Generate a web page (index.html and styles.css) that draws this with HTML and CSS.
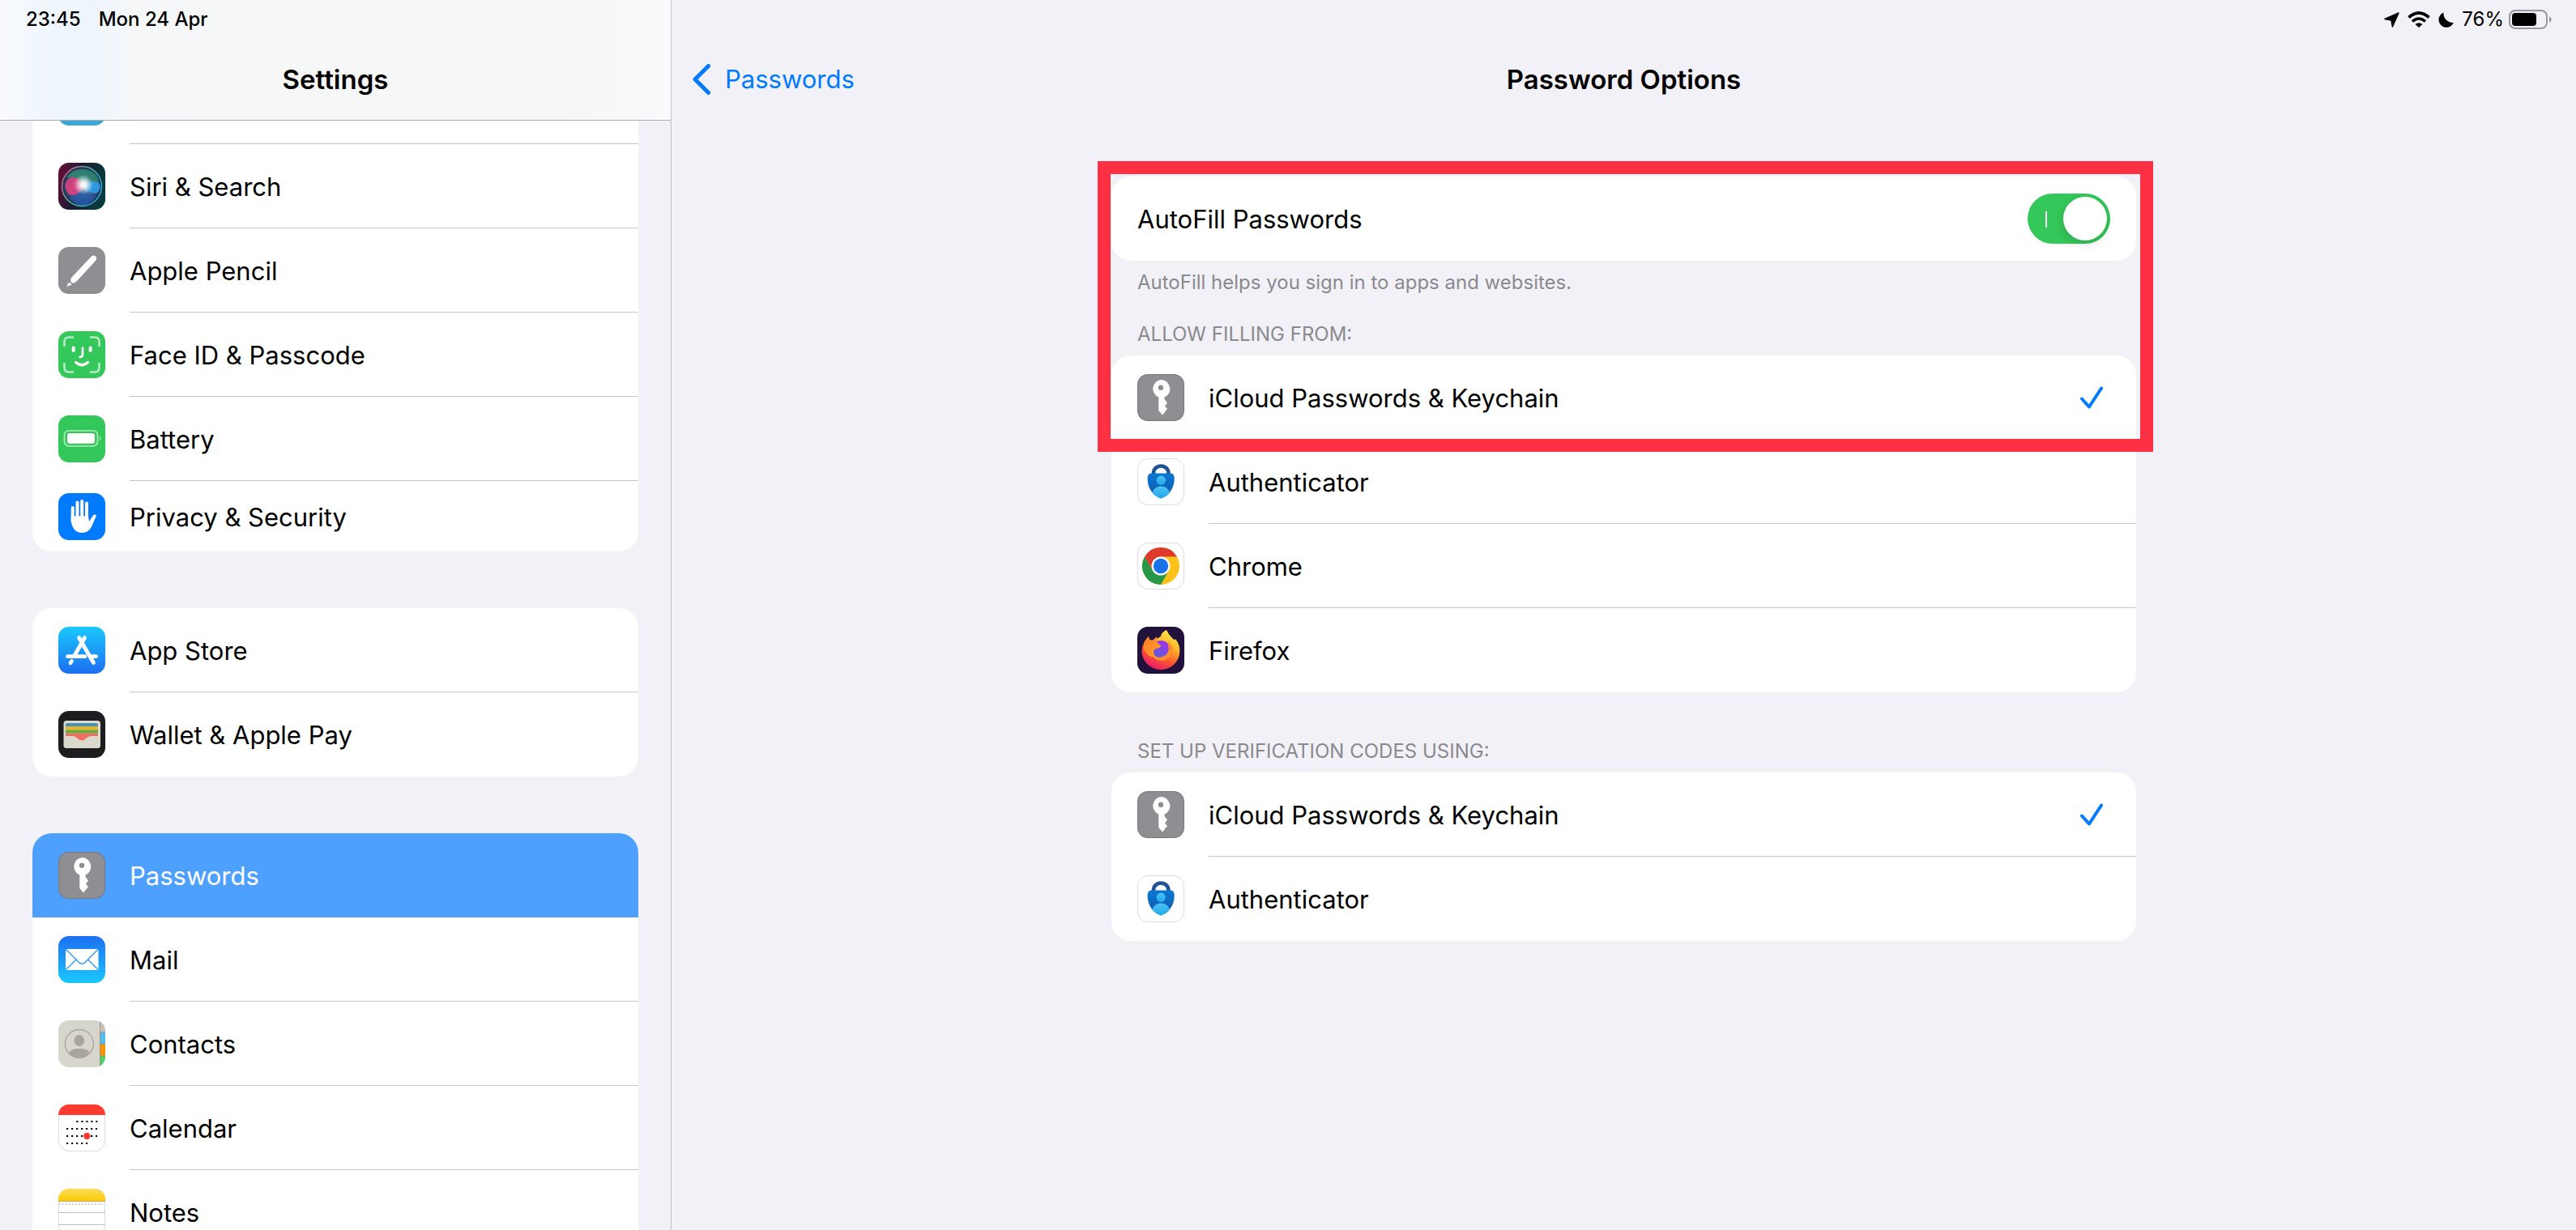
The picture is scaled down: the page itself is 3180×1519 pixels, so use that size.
FILE: index.html
```html
<!DOCTYPE html>
<html lang="en">
<head>
  <meta charset="UTF-8" />
  <meta name="viewport" content="width=device-width, initial-scale=1.0" />
  <title>Settings - Password Options</title>
  <link rel="stylesheet" href="styles.css">
</head>
<body>
  <!-- Shared icons -->
  <svg class="sprite" aria-hidden="true">
    <symbol id="icon-key" viewBox="0 0 58 58">
      <rect width="58" height="58" rx="13" fill="#77777c"/>
      <rect x="1" y="1" width="56" height="56" rx="12" fill="#8e8e93"/>
      <path fill="#fff" fill-rule="evenodd" d="M29 7a11.2 11.2 0 0 1 4.5 21.5V31l3.500 4.500-3 4 3 3.500-6 7.500-4.700-5.500V28.500A11.200 11.200 0 0 1 29 7zm0 6.500a3.200 3.200 0 1 0 0 6.400 3.200 3.200 0 0 0 0-6.400z"/>
    </symbol>
    <symbol id="icon-auth" viewBox="0 0 58 58">
      <defs>
        <linearGradient id="authBody" x1="0" y1="0" x2="0" y2="1"><stop offset="0" stop-color="#0a78d4"/><stop offset="1" stop-color="#1257a5"/></linearGradient>
        <linearGradient id="authMan" x1="0" y1="0" x2="0" y2="1"><stop offset="0" stop-color="#4cc3f4"/><stop offset="1" stop-color="#22a7ea"/></linearGradient>
      </defs>
      <rect x="0.5" y="0.5" width="57" height="57" rx="12.5" fill="#fff" stroke="#dcdcde"/>
      <path d="M20 21v-3a9.200 8.500 0 0 1 18.400 0v3" fill="none" stroke="#1f5494" stroke-width="4.5"/>
      <path d="M17 18.500h24.500q4 0 4.200 6C46 38 38 46 29.200 49.500 20 46 12.300 38 12.600 24.500q.2-6 4.400-6z" fill="url(#authBody)"/>
      <circle cx="29.2" cy="27.2" r="5.7" fill="url(#authMan)"/>
      <path d="M18.500 43c1-5 5-8.500 10.700-8.500S39 38 40 43c-3.200 3.300-7 5.300-10.800 6.600C25.300 48.300 21.700 46.300 18.500 43z" fill="url(#authMan)"/>
    </symbol>
    <symbol id="icon-tick" viewBox="0 0 28 28">
      <path d="M2 15.500 11 25.500 26 2.500" fill="none" stroke="#007aff" stroke-width="4" stroke-linecap="round" stroke-linejoin="round"/>
    </symbol>
  </svg>

  <div class="screen">
    <aside class="sidebar">
      <header class="sidebar-header">
        <div class="status">
          <span>23:45</span>
          <span>Mon 24 Apr</span>
        </div>
        <h1 class="title">Settings</h1>
      </header>

      <nav class="sidebar-list">
        <div class="group group-first">
          <a href="#" class="row row-cut" aria-label="Wallpaper">
            <svg class="icon" viewBox="0 0 58 58"><rect width="58" height="58" rx="13" fill="#38a8dc"/></svg>
            <span class="label"></span>
          </a>
          <a href="#" class="row">
            <svg class="icon" viewBox="0 0 58 58">
              <defs>
                <linearGradient id="siriBg" x1="0" y1="0" x2="1" y2="0.3"><stop offset="0" stop-color="#6a0f35"/><stop offset="0.5" stop-color="#1b1a35"/><stop offset="1" stop-color="#063a3c"/></linearGradient>
                <radialGradient id="siriOrb"><stop offset="0" stop-color="#8fb5d8"/><stop offset="0.6" stop-color="#3c5f88"/><stop offset="1" stop-color="#1c2c4e"/></radialGradient>
                <linearGradient id="siriRing" x1="0" y1="0.2" x2="1" y2="0.8"><stop offset="0" stop-color="#e85a83"/><stop offset="0.5" stop-color="#3fc09a"/><stop offset="1" stop-color="#2f9be8"/></linearGradient>
                <radialGradient id="siriGlow"><stop offset="0" stop-color="#fff"/><stop offset="0.3" stop-color="#fff" stop-opacity="0.85"/><stop offset="1" stop-color="#fff" stop-opacity="0"/></radialGradient>
              </defs>
              <rect width="58" height="58" rx="13" fill="url(#siriBg)"/>
              <circle cx="29" cy="29" r="24.5" fill="url(#siriOrb)"/>
              <path d="M10 18Q22 2 42 11 52 18 50 28 36 32 30 27 20 18 10 18z" fill="#2f8a70" opacity="0.8"/>
              <path d="M31 28Q22 12 11 21 5 30 13 39 24 44 31 28z" fill="#dd3f7d" opacity="0.9"/>
              <path d="M31 28Q47 17 52 29 50 41 41 37 36 35 31 28z" fill="#2d9ce6" opacity="0.9"/>
              <path d="M14 42Q26 40 31 29 37 44 47 40 40 53 28 53 18 50 14 42z" fill="#2457a8" opacity="0.8"/>
              <circle cx="29" cy="29" r="24.5" fill="none" stroke="url(#siriRing)" stroke-width="1.5"/>
              <circle cx="31" cy="27" r="12" fill="url(#siriGlow)"/>
            </svg>
            <span class="label">Siri &amp; Search</span>
          </a>
          <a href="#" class="row">
            <svg class="icon" viewBox="0 0 58 58">
              <rect width="58" height="58" rx="13" fill="#8e8e93"/>
              <path d="M41 11.500q2.500-2 5 0 2 2.500 0 5.500L23 42q-2 2.500-6 2.700-3-2.500-1-6.700z" fill="#fff"/>
              <path d="M13 43.500 17 46.500 10 49z" fill="#fff"/>
            </svg>
            <span class="label">Apple Pencil</span>
          </a>
          <a href="#" class="row">
            <svg class="icon" viewBox="0 0 58 58" fill="none" stroke="#fff" stroke-linecap="round">
              <rect width="58" height="58" rx="13" fill="#34c759" stroke="none"/>
              <path d="M7.500 18v-5q0-5.500 5.500-5.500h5M40 7.500h5q5.500 0 5.500 5.500v5M50.500 40v5q0 5.500-5.500 5.500h-5M18 50.500h-5q-5.500 0-5.500-5.500v-5" stroke-width="2.6" opacity="0.65"/>
              <path d="M18.700 20.500v3.500M39.600 20.500v3.500" stroke-width="4"/>
              <path d="M30 20.500v8.500q0 3-3.500 3" stroke-width="2.6"/>
              <path d="M21.500 38.500q7.500 6.500 15 0" stroke-width="3.2"/>
            </svg>
            <span class="label">Face ID &amp; Passcode</span>
          </a>
          <a href="#" class="row">
            <svg class="icon" viewBox="0 0 58 58">
              <rect width="58" height="58" rx="13" fill="#34c759"/>
              <rect x="7.5" y="18.8" width="41" height="19" rx="5.5" fill="none" stroke="#a6e7b5" stroke-width="1.8"/>
              <rect x="11" y="22" width="34" height="12.7" rx="3" fill="#fff"/>
              <path d="M51 25q3 3.300 0 6.600z" fill="#a6e7b5"/>
            </svg>
            <span class="label">Battery</span>
          </a>
          <a href="#" class="row row-short">
            <svg class="icon" viewBox="0 0 58 58" fill="#fff" stroke="#fff" stroke-linecap="round">
              <rect width="58" height="58" rx="13" fill="#007aff" stroke="none"/>
              <path d="M17.700 18v16M23.500 11.500v20M29.200 10v20M35 12.500v20" stroke-width="4"/>
              <path d="M15.700 28.500h21.300l1 6.500 5-7.500q2.200-2 4 .3-2 4.700-4.500 10.200C39.500 45.500 36 49 29 49q-8 0-11.300-7.500-1.800-4-2-7z" stroke="none"/>
            </svg>
            <span class="label">Privacy &amp; Security</span>
          </a>
        </div>

        <div class="group">
          <a href="#" class="row">
            <svg class="icon" viewBox="0 0 58 58">
              <defs><linearGradient id="storeBg" x1="0" y1="0" x2="0" y2="1"><stop offset="0" stop-color="#1ac8fc"/><stop offset="1" stop-color="#1d6ff2"/></linearGradient></defs>
              <rect width="58" height="58" rx="13" fill="url(#storeBg)"/>
              <path d="M32.500 13.500 19.500 36.500M25.500 13.500 43.500 44.500M11.500 36.700h21.500M41 36.700h5.500M16.500 42.500l-1.500 2.300" fill="none" stroke="#fff" stroke-width="4.8" stroke-linecap="round"/>
            </svg>
            <span class="label">App Store</span>
          </a>
          <a href="#" class="row">
            <svg class="icon" viewBox="0 0 58 58">
              <rect width="58" height="58" rx="13" fill="#1d1d1f"/>
              <rect x="6.5" y="12" width="45.5" height="34" rx="3.5" fill="#dbd8cd"/>
              <path d="M9 19v-2q0-2 2-2h36q2 0 2 2v2z" fill="#4294b8"/>
              <path d="M9 19h40v4.500H9z" fill="#e9b32a"/>
              <path d="M9 23.500h40v4H9z" fill="#64ab3b"/>
              <path d="M9 27.500h40V31h-9q-3 0-5 2.500-6 5.500-12 0-2-2.500-5-2.500H9z" fill="#ee6e60"/>
            </svg>
            <span class="label">Wallet &amp; Apple Pay</span>
          </a>
        </div>

        <div class="group">
          <a href="#" class="row row-active" aria-current="page">
            <svg class="icon"><use href="#icon-key"/></svg>
            <span class="label">Passwords</span>
          </a>
          <a href="#" class="row">
            <svg class="icon" viewBox="0 0 58 58">
              <defs><linearGradient id="mailBg" x1="0" y1="0" x2="0" y2="1"><stop offset="0" stop-color="#1d6ff2"/><stop offset="1" stop-color="#1ac8fc"/></linearGradient></defs>
              <rect width="58" height="58" rx="13" fill="url(#mailBg)"/>
              <rect x="9" y="16" width="40.5" height="26" rx="2.5" fill="#fff"/>
              <path d="M10 17 25.500 32.500q3.700 3.400 7.500 0L48.500 17M10 41l12-12M48.500 41l-12-12" fill="none" stroke="#2a93f5" stroke-width="1.3"/>
            </svg>
            <span class="label">Mail</span>
          </a>
          <a href="#" class="row">
            <svg class="icon" viewBox="0 0 58 58">
              <clipPath id="tile"><rect width="58" height="58" rx="13"/></clipPath>
              <g clip-path="url(#tile)">
                <path d="M0 0h58v58H0z" fill="#d7d6cc"/>
                <path d="M51.500 0H58v15h-6.500z" fill="#c5c3bb"/>
                <path d="M51.500 15H58v14h-6.500z" fill="#55bef0"/>
                <path d="M51.500 29H58v15h-6.500z" fill="#ff9500"/>
                <path d="M51.500 44H58v14h-6.500z" fill="#4cd265"/>
                <path d="M51.500 0v58M51.500 15H58M51.500 29.500H58M51.500 44H58" stroke="#8f8a7c" stroke-width="0.8"/>
              </g>
              <circle cx="25.8" cy="29" r="17.5" fill="none" stroke="#aaa49c" stroke-width="1.3"/>
              <ellipse cx="25.8" cy="25" rx="6.2" ry="7" fill="#aaa49c"/>
              <path d="M13 40.500q1.500-5.500 12.800-5.500t12.800 5.500Q33.500 46.500 25.800 46.500T13 40.500z" fill="#aaa49c"/>
            </svg>
            <span class="label">Contacts</span>
          </a>
          <a href="#" class="row">
            <svg class="icon" viewBox="0 0 58 58">
              <rect x="0.5" y="0.5" width="57" height="57" rx="12.5" fill="#fff" stroke="#dcdcde"/>
              <path d="M0 13A13 13 0 0 1 13 0h32a13 13 0 0 1 13 13z" fill="#ff3b30"/>
              <path d="M22.300 21h26M10 30h38M10 39h38M10 48h27" stroke="#000" stroke-width="2.2" stroke-dasharray="2.2 3.8"/>
              <circle cx="35.3" cy="39" r="4.2" fill="#ff3b30"/>
            </svg>
            <span class="label">Calendar</span>
          </a>
          <a href="#" class="row">
            <svg class="icon" viewBox="0 0 58 58">
              <defs><linearGradient id="notesBg" x1="0" y1="0" x2="0" y2="1"><stop offset="0" stop-color="#fddc5a"/><stop offset="1" stop-color="#fccb05"/></linearGradient></defs>
              <rect x="0.5" y="0.5" width="57" height="57" rx="12.5" fill="#fff" stroke="#dcdcde"/>
              <path d="M0 15v-2A13 13 0 0 1 13 0h32a13 13 0 0 1 13 13v2z" fill="url(#notesBg)"/>
              <path d="M0 15.500h58" stroke="#c2a858"/>
              <path d="M1 19h56" stroke="#c8c8ca" stroke-width="1.6" stroke-dasharray="2 2"/>
              <path d="M0 29.500h58M0 44.500h58" stroke="#c0c0c2"/>
            </svg>
            <span class="label">Notes</span>
          </a>
        </div>
      </nav>
    </aside>

    <main class="main">
      <header class="main-header">
        <div class="status status-right">
          <svg width="19" height="19" viewBox="0 0 19 19"><path d="M18 1 10.500 18 9 10 1 8.500z" stroke="#000" stroke-width="1.5" stroke-linejoin="round"/></svg>
          <svg width="28" height="20" viewBox="0 0 28 20" fill="none" stroke="#000">
            <path d="M1.500 7.500q12.500-11 25 0" stroke-width="3.8"/>
            <path d="M6 12.500q8-7 16 0" stroke-width="3.6"/>
            <path d="M9.500 16q4.500-3.500 9 0L14 20z" fill="#000" stroke="none"/>
          </svg>
          <svg width="19" height="19" viewBox="0 0 19 19"><path d="M6.500.5A9.500 9.500 0 1 0 18.800 13 11.500 11.500 0 0 1 6.500.5z"/></svg>
          <span class="battery">
            <span>76%</span>
            <svg width="53" height="24" viewBox="0 0 53 24">
              <rect x="1" y="1" width="46" height="22" rx="7" fill="none" stroke="#97979b" stroke-width="2"/>
              <rect x="4" y="4" width="30" height="16" rx="4"/>
              <path d="M50 8q5.500 4 0 8z" fill="#97979b"/>
            </svg>
          </span>
        </div>
        <div class="nav-bar">
          <a href="#" class="back">
            <svg width="22" height="38" viewBox="0 0 22 38"><path d="M19.500 2.500 3 19l16.500 16.500" fill="none" stroke="#007aff" stroke-width="5" stroke-linecap="round" stroke-linejoin="round"/></svg>
            Passwords
          </a>
          <h2 class="title">Password Options</h2>
        </div>
      </header>

      <div class="options">
        <div class="highlight"></div>

        <div class="group">
          <label class="row">
            <span class="label">AutoFill Passwords</span>
            <input type="checkbox" class="switch" checked>
          </label>
        </div>
        <p class="note">AutoFill helps you sign in to apps and websites.</p>

        <h3 class="group-title">ALLOW FILLING FROM:</h3>
        <div class="group">
          <label class="row">
            <svg class="icon"><use href="#icon-key"/></svg>
            <span class="label">iCloud Passwords &amp; Keychain</span>
            <input type="checkbox" class="pick" checked>
            <svg class="tick"><use href="#icon-tick"/></svg>
          </label>
          <label class="row">
            <svg class="icon"><use href="#icon-auth"/></svg>
            <span class="label">Authenticator</span>
            <input type="checkbox" class="pick">
            <svg class="tick"><use href="#icon-tick"/></svg>
          </label>
          <label class="row">
            <svg class="icon" viewBox="0 0 58 58">
              <rect x="0.5" y="0.5" width="57" height="57" rx="12.5" fill="#fff" stroke="#dcdcde"/>
              <circle cx="29" cy="29" r="23" fill="#fcc21b"/>
              <path d="M9.080 17.500A23 23 0 0 1 48.920 17.500H29L19.040 34.750z" fill="#dc3a2d"/>
              <path d="M9.080 17.500 19.040 34.750H38.960L29 52A23 23 0 0 1 9.080 17.500z" fill="#279847"/>
              <circle cx="29" cy="29" r="11.5" fill="#fff"/>
              <circle cx="29" cy="29" r="9.2" fill="#1a73e8"/>
            </svg>
            <span class="label">Chrome</span>
            <input type="checkbox" class="pick">
            <svg class="tick"><use href="#icon-tick"/></svg>
          </label>
          <label class="row">
            <svg class="icon" viewBox="0 0 58 58">
              <defs>
                <linearGradient id="foxFire" x1="0.8" y1="0" x2="0.3" y2="1"><stop offset="0" stop-color="#fff04f"/><stop offset="0.35" stop-color="#ffb62c"/><stop offset="0.65" stop-color="#ff5a2f"/><stop offset="1" stop-color="#e8156b"/></linearGradient>
                <linearGradient id="foxGlobe" x1="0.7" y1="0" x2="0.3" y2="1"><stop offset="0" stop-color="#a033e8"/><stop offset="1" stop-color="#5a5fd8"/></linearGradient>
                <linearGradient id="foxHead" x1="0" y1="0" x2="1" y2="1"><stop offset="0" stop-color="#ff7a29"/><stop offset="1" stop-color="#ffa42b"/></linearGradient>
              </defs>
              <rect width="58" height="58" rx="13" fill="#20123a"/>
              <path d="M36 4q3 6.500 8 11 1.500 1.500 2.500 1l.5-1q6 7.500 5.300 16C51.500 44 41 53 29 53S6 43.500 5.500 30.500q0-6 3-11.500l1-2 4.500-5q.5 3 2 4.500 2 .5 4 .5 9-5 9-5 0-4.500 7-8z" fill="url(#foxFire)"/>
              <circle cx="29" cy="28.5" r="11.5" fill="url(#foxGlobe)"/>
              <path d="M36 18q6 2 7.500 8 1 12-10 15.500-12 2.500-15.500-8 5 5 11 4 8-1.500 9.500-8.500.5-7-2.500-11z" fill="#ff8f2c"/>
              <path d="M8.500 20.500q2-5 5-8.500.5 3 2.500 5l4-1 4-4v6q2 4 5 5 0 3-5.500 4-3.500 1-3.500 4 0 4 3 6-8 2.500-14-7-2-5-.500-9.500z" fill="url(#foxHead)"/>
            </svg>
            <span class="label">Firefox</span>
            <input type="checkbox" class="pick">
            <svg class="tick"><use href="#icon-tick"/></svg>
          </label>
        </div>

        <h3 class="group-title group-title-spaced">SET UP VERIFICATION CODES USING:</h3>
        <div class="group">
          <label class="row">
            <svg class="icon"><use href="#icon-key"/></svg>
            <span class="label">iCloud Passwords &amp; Keychain</span>
            <input type="checkbox" class="pick" checked>
            <svg class="tick"><use href="#icon-tick"/></svg>
          </label>
          <label class="row">
            <svg class="icon"><use href="#icon-auth"/></svg>
            <span class="label">Authenticator</span>
            <input type="checkbox" class="pick">
            <svg class="tick"><use href="#icon-tick"/></svg>
          </label>
        </div>
      </div>
    </main>
  </div>
</body>
</html>
```
FILE: styles.css
```css
* {
  box-sizing: border-box;
}
body {
  margin: 0;
  font-family: Inter, "Liberation Sans", sans-serif;
  font-size: 31px;
  line-height: 40px;
  color: #000;
  background-color: #f2f1f7;
}
h1, h2, h3, p {
  margin: 0;
}
a {
  color: inherit;
  text-decoration: none;
}
.sprite {
  position: absolute;
  width: 0;
  height: 0;
}
.screen {
  display: grid;
  grid-template-columns: 829px 1fr;
  height: 100vh;
  overflow: hidden;
}

/* Sidebar */
.sidebar {
  display: flex;
  flex-direction: column;
  min-height: 0;
  border-right: 1px solid #c6c6c8;
}
.sidebar-header {
  flex: none;
  height: 149px;
  border-bottom: 1px solid #adadb0;
  background: linear-gradient(90deg, #f9fafd 0, #f1f6fd 50px, #eef5fd 110px, #f6f7f8 170px, #f7f7f7 700px, #fafafc 828px);
}
.status {
  display: flex;
  align-items: center;
  gap: 22px;
  height: 48px;
  padding: 0 32px;
  font-size: 24px;
  font-weight: 500;
}
.title {
  font-size: 33px;
  font-weight: 600;
  line-height: 100px;
  text-align: center;
}
.sidebar-list {
  flex: 1;
  min-height: 0;
  overflow: hidden;
  padding: 0 40px;
}
.sidebar-list .group {
  margin-bottom: 70px;
}

/* Groups and rows */
.group {
  border-radius: 24px;
  background-color: white;
  overflow: hidden;
}
.group-first {
  border-radius: 0 0 24px 24px;
}
.row {
  position: relative;
  display: flex;
  align-items: center;
  height: 104px;
  padding-left: 32px;
}
/* divider starts at the text and runs to the card edge */
.row:not(:last-child) {
  background: linear-gradient(#c6c6c8, #c6c6c8) 120px 100% / 100% 1px no-repeat;
}
.icon {
  flex: none;
  width: 58px;
  height: 58px;
  margin-right: 30px;
}
.label {
  flex: 1;
  padding-top: 2px;
}
.row-cut {
  height: 29px;
  align-items: flex-end;
  overflow: hidden;
}
.row-cut .icon {
  margin-bottom: 23px;
}
.row-short {
  height: 87px;
}
.row.row-active {
  color: white;
  background: #4ea0ff;
}

/* Main pane */
.main-header {
  height: 149px;
}
.status-right {
  justify-content: flex-end;
  gap: 10px;
  padding-right: 30px;
  font-weight: 400;
}
.battery {
  display: flex;
  align-items: center;
  gap: 6px;
}
.nav-bar {
  display: grid;
  grid-template-columns: 1fr auto 1fr;
  align-items: center;
  padding: 0 26px;
}
.back {
  display: flex;
  align-items: center;
  gap: 18px;
  color: #007aff;
}
.options {
  position: relative;
  width: 54%;
  max-width: 1265px;
  margin: 69px auto 0;
}
.note, .group-title {
  padding-left: 32px;
  font-size: 24px;
  font-weight: 400;
  line-height: 30px;
  color: #8a8a8e;
}
.note {
  padding-top: 12px;
}
.group-title {
  padding-top: 34px;
  padding-bottom: 11px;
}
.group-title-spaced {
  padding-top: 58px;
}
.highlight {
  position: absolute;
  top: -19px;
  left: -17px;
  right: -21px;
  height: 359px;
  border: 16px solid #fd3044;
  z-index: 1;
  pointer-events: none;
}
.switch {
  appearance: none;
  position: relative;
  width: 102px;
  height: 62px;
  margin: 0 32px 0 0;
  border-radius: 31px;
  background-color: #d9d9de;
}
.switch:checked {
  background-color: #34c759;
}
.switch::before {
  content: "";
  position: absolute;
  top: 22px;
  left: 22px;
  width: 2px;
  height: 20px;
  background-color: white;
}
.switch::after {
  content: "";
  position: absolute;
  top: 4px;
  left: 4px;
  width: 54px;
  height: 54px;
  border-radius: 50%;
  background-color: white;
  box-shadow: 0 4px 12px rgba(0,0,0,0.15);
}
.switch:checked::after {
  left: 44px;
}
.pick {
  appearance: none;
  position: absolute;
  inset: 0;
  margin: 0;
}
.tick {
  visibility: hidden;
  width: 28px;
  height: 28px;
  margin-right: 41px;
}
.pick:checked + .tick {
  visibility: visible;
}
```
